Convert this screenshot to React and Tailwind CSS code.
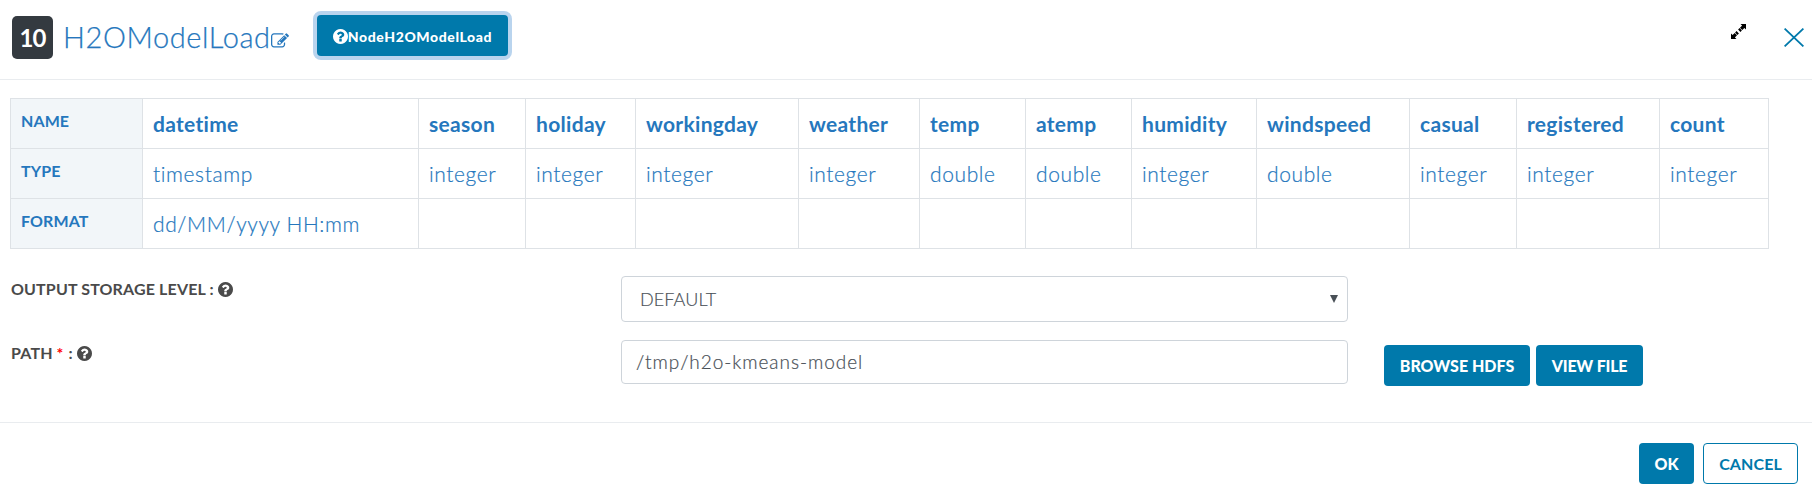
const COLUMNS = [
  { name: "datetime", type: "timestamp", format: "dd/MM/yyyy HH:mm", width: "w-[276px]" },
  { name: "season", type: "integer", width: "w-[107px]" },
  { name: "holiday", type: "integer", width: "w-[110px]" },
  { name: "workingday", type: "integer", width: "w-[163px]" },
  { name: "weather", type: "integer", width: "w-[121px]" },
  { name: "temp", type: "double", width: "w-[106px]" },
  { name: "atemp", type: "double", width: "w-[106px]" },
  { name: "humidity", type: "integer", width: "w-[125px]" },
  { name: "windspeed", type: "double", width: "w-[153px]" },
  { name: "casual", type: "integer", width: "w-[107px]" },
  { name: "registered", type: "integer", width: "w-[143px]" },
  { name: "count", type: "integer", width: "w-[109px]" },
];

function QuestionIcon({ className }) {
  return (
    <svg viewBox="128 128 1536 1536" fill="currentColor" className={className}>
      <path d="M1024 1376v-192q0-14-9-23t-23-9h-192q-14 0-23 9t-9 23v192q0 14 9 23t23 9h192q14 0 23-9t9-23zm256-672q0-88-55.5-163t-138.5-116-170-41q-243 0-371 213-15 24 8 42l132 100q7 6 19 6 16 0 25-12 53-68 86-92 34-24 86-24 48 0 85.5 26t37.5 59q0 38-20 61t-68 45q-63 28-115.5 86.5t-52.5 125.5v36q0 14 9 23t23 9h192q14 0 23-9t9-23q0-19 21.5-49.5t54.5-49.5q32-18 49-28.5t46-35 44.5-48 28-60.5 12.5-81zm384 192q0 209-103 385.5t-279.5 279.5-385.5 103-385.5-103-279.5-279.5-103-385.5 103-385.5 279.5-279.5 385.5-103 385.5 103 279.5 279.5 103 385.5z" />
    </svg>
  );
}

function EditIcon({ className }) {
  return (
    <svg viewBox="0 0 1792 1792" fill="currentColor" className={className}>
      <path d="M888 1184l116-116-152-152-116 116v56h96v96h56zm440-720q-16-16-33 1l-350 350q-17 17-1 33t33-1l350-350q17-17 1-33zm80 594v190q0 119-84.5 203.5t-203.5 84.5h-832q-119 0-203.5-84.5t-84.5-203.5v-832q0-119 84.5-203.5t203.5-84.5h832q63 0 117 25 15 7 18 23 3 17-9 29l-49 49q-14 14-32 8-23-6-45-6h-832q-66 0-113 47t-47 113v832q0 66 47 113t113 47h832q66 0 113-47t47-113v-126q0-13 9-22l64-64q15-15 35-7t20 29zm-96-738l288 288-672 672h-288v-288zm444 132l-92 92-288-288 92-92q28-28 68-28t68 28l152 152q28 28 28 68t-28 68z" />
    </svg>
  );
}

function Header() {
  return (
    <header className="flex h-20 items-start border-b border-[#e9ecef] pl-3">
      <span className="mt-4 flex h-[43px] w-[41px] items-center justify-center rounded-[5px] bg-[#343a40] pt-px text-[24px] font-bold tracking-[-1px] text-white">
        10
      </span>
      <h1 className="mt-[17px] ml-[10px] flex w-[208px] text-[29px] leading-[40px] font-light tracking-[0.6px] whitespace-nowrap text-[#2577bd] [-webkit-text-stroke:0.25px]">
        H2OModelLoad
      </h1>
      <EditIcon className="mt-8 h-[18px] w-[18px] text-[#2577bd]" />
      <button className="mt-[15px] ml-7 flex h-[41px] w-[191px] items-center justify-center rounded-[4px] bg-[#0079ab] pt-px text-[14px] font-black tracking-[0.6px] text-white ring-4 ring-[#b9d4ee]">
        <QuestionIcon className="h-[15px] w-[15px]" />
        NodeH2OModelLoad
      </button>
      <div className="ml-auto flex items-start gap-[38px] pr-2">
        <svg viewBox="0 0 15 15" className="mt-6 h-[15px] w-[15px]" fill="#000">
          <path d="M9.5 0H15v5.5l-1.6-1.6-2.1 2.1-2.3-2.3 2.1-2.1zM0 9.5l1.6 1.6L3.7 9 6 11.3l-2.1 2.1L5.5 15H0zM8.6 4.1l2.3 2.3-1.5 1.5-2.3-2.3zM5.6 7.1l2.3 2.3-1.5 1.5-2.3-2.3z" />
        </svg>
        <svg viewBox="0 0 20 19" className="mt-7 h-[19px] w-5" fill="none" stroke="#0079ab" strokeWidth="1.8">
          <path d="M.6.6l18.8 17.8M19.4.6L.6 18.4" />
        </svg>
      </div>
    </header>
  );
}

function SchemaTable() {
  const label =
    "w-[132px] border-r border-b border-[#dee2e6] bg-[#f2f6f9] pt-[10px] pl-2.5 text-left align-top text-[16px] leading-6 font-bold tracking-[0.1px]";
  const value =
    "border-r border-b border-[#dee2e6] pt-px pl-2.5 text-[21px] font-light tracking-[0.6px] [-webkit-text-stroke:0.2px]";
  return (
    <table className="ml-[10px] w-[1759px] table-fixed border-separate border-spacing-0 border-t border-l border-[#dee2e6] leading-6 text-[#2577bd]">
      <tbody>
        <tr className="h-[50px]">
          <th className={label}>NAME</th>
          {COLUMNS.map((c) => (
            <th key={c.name} className={`${c.width} border-r border-b border-[#dee2e6] pl-2.5 text-left text-[21px] font-bold tracking-[0.3px]`}>
              {c.name}
            </th>
          ))}
        </tr>
        <tr className="h-[50px]">
          <th className={label}>TYPE</th>
          {COLUMNS.map((c) => (
            <td key={c.name} className={value}>
              {c.type}
            </td>
          ))}
        </tr>
        <tr className="h-[50px]">
          <th className={label}>FORMAT</th>
          {COLUMNS.map((c) => (
            <td key={c.name} className={value}>
              {c.format}
            </td>
          ))}
        </tr>
      </tbody>
    </table>
  );
}

function Form() {
  const label = "flex w-[611px] items-center pt-px pl-px text-[16px] leading-6 font-bold tracking-[0.15px] text-[#4a4a4a]";
  return (
    <div className="mt-[27px] flex flex-col gap-[18px] pl-[10px]">
      <div className="flex items-start">
        <div className={label}>
          OUTPUT STORAGE LEVEL :
          <QuestionIcon className="ml-1 h-[15px] w-[15px]" />
        </div>
        <div className="flex h-[46px] w-[727px] items-center justify-between rounded-[4px] border border-[#ced4da] pr-[9px] pl-[18px] text-[18px] font-light tracking-[0.1px] text-[#495057] [-webkit-text-stroke:0.2px]">
          DEFAULT
          <svg viewBox="0 0 8 8" className="h-2 w-2" fill="#495057">
            <path d="M0 0h8L4 8z" />
          </svg>
        </div>
      </div>
      <div className="flex items-start">
        <div className={label}>
          PATH <span className="ml-1 text-[#ff0000]">*</span>
          <span className="ml-[5px]">:</span>
          <QuestionIcon className="ml-1 h-[15px] w-[15px]" />
        </div>
        <div className="flex h-11 w-[727px] items-center rounded-[4px] border border-[#ced4da] pl-[14px] text-[19px] font-light tracking-[0.95px] text-[#495057] [-webkit-text-stroke:0.2px]">
          /tmp/h2o-kmeans-model
        </div>
        <div className="mt-[5px] ml-9 flex gap-1.5 text-[16px] font-bold text-white">
          <button className="h-[41px] w-[146px] rounded-[4px] bg-[#0079ab] font-black">BROWSE HDFS</button>
          <button className="h-[41px] w-[107px] rounded-[4px] bg-[#0079ab] font-black tracking-[-0.2px]">VIEW FILE</button>
        </div>
      </div>
    </div>
  );
}

function Footer() {
  return (
    <footer className="mt-[36px] flex justify-end gap-[9px] border-t border-[#e9ecef] pt-5 pr-[14px] text-[16px] font-bold">
      <button className="h-[41px] w-[55px] rounded-[4px] bg-[#0079ab] font-black text-white">OK</button>
      <button className="h-[41px] w-[95px] rounded-[4px] border border-[#0079ab] tracking-[0.1px] text-[#0079ab]">CANCEL</button>
    </footer>
  );
}

export default function App() {
  return (
    <div className="h-[495px] w-[1812px] overflow-hidden bg-white font-['Lato',sans-serif]">
      <Header />
      <main className="pt-[18px]">
        <SchemaTable />
        <Form />
      </main>
      <Footer />
    </div>
  );
}
